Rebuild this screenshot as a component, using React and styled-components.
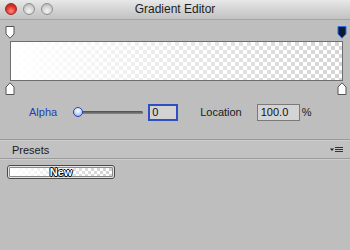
import React from "react";
import styled, { createGlobalStyle } from "styled-components";

const Global = createGlobalStyle`
  html, body { margin: 0; padding: 0; background: #bfbfbf; }
  body { width: 350px; height: 250px; overflow: hidden; font-family: "Liberation Sans", Arial, sans-serif; }
`;

const Window = styled.div`
  width: 350px;
  height: 250px;
  background: #bebebe;
  display: flex;
  flex-direction: column;
`;

const TitleBar = styled.div`
  height: 20px;
  display: flex;
  align-items: flex-start;
  position: relative;
  background: linear-gradient(#e8e8e8 0%, #d0d0d0 60%, #c2c2c2 100%);
  border-bottom: 1px solid #a4a4a4;
  box-sizing: border-box;
`;

const Lights = styled.div`
  display: flex;
  gap: 6px;
  padding: 3px 0 0 5px;
`;

const Light = styled.div`
  width: 12px;
  height: 12px;
  border-radius: 50%;
  box-sizing: border-box;
  border: 1px solid ${(p) => (p.$red ? "#9a2a2a" : "#8f8f8f")};
  background: ${(p) =>
    p.$red
      ? "radial-gradient(circle at 50% 70%, #ff8a80 0%, #e0332b 55%, #a81d16 100%)"
      : "radial-gradient(circle at 50% 70%, #f4f4f4 0%, #d2d2d2 55%, #a9a9a9 100%)"};
`;

const Title = styled.div`
  position: absolute;
  left: 0;
  right: 0;
  top: 2px;
  text-align: center;
  font-size: 12px;
  line-height: 14px;
  color: #1e1e1e;
  pointer-events: none;
`;

const Body = styled.div`
  flex: 1;
  display: flex;
  flex-direction: column;
  padding-top: 6px;
`;

const MarkerRow = styled.div`
  display: flex;
  justify-content: space-between;
  padding: 0 3px 0 5px;
  height: ${(p) => p.$h}px;
  align-items: ${(p) => (p.$bottom ? "flex-start" : "flex-end")};
`;

const Marker = ({ dark, up }) => (
  <svg width="10" height="13" viewBox="0 0 10 13" style={{ display: "block" }}>
    {up ? (
      <path d="M1 12.5 V5 L5 0.8 L9 5 V12.5 Z" fill="#fff" stroke="#555" strokeWidth="1" />
    ) : (
      <path
        d="M1 0.5 H9 V8 L5 12.2 L1 8 Z"
        fill={dark ? "#0d1a33" : "#fff"}
        stroke={dark ? "#2a6fe0" : "#555"}
        strokeWidth="1"
      />
    )}
  </svg>
);

const GradientBar = styled.div`
  margin: 2px 7px 1px 10px;
  height: 40px;
  box-sizing: border-box;
  border: 1px solid #6e6e6e;
  background:
    linear-gradient(to right, #fff 0%, rgba(255, 255, 255, 0) 100%),
    conic-gradient(#d4d4d4 0 25%, #fff 0 50%, #d4d4d4 0 75%, #fff 0) 0 0 / 8px 8px;
`;

const ControlRow = styled.div`
  display: flex;
  align-items: center;
  height: 18px;
  margin-top: 8px;
  padding-left: 29px;
  font-size: 11px;
`;

const Label = styled.span`
  color: ${(p) => (p.$blue ? "#1d3fb8" : "#1a1a1a")};
  margin-right: ${(p) => p.$mr || 0}px;
`;

const Slider = styled.div`
  position: relative;
  width: 70px;
  height: 12px;
  margin-right: 5px;
  display: flex;
  align-items: center;
`;

const Track = styled.div`
  width: 100%;
  height: 3px;
  border-radius: 2px;
  background: linear-gradient(#4a4a4a, #8a8a8a);
`;

const Knob = styled.div`
  position: absolute;
  left: 0;
  top: 1px;
  width: 10px;
  height: 10px;
  border-radius: 50%;
  box-sizing: border-box;
  border: 1px solid #2a47b8;
  background: radial-gradient(circle at 50% 35%, #fff 0%, #b9d0f5 60%, #6f93dc 100%);
`;

const Field = styled.div`
  width: ${(p) => p.$w}px;
  height: 17px;
  box-sizing: border-box;
  border: ${(p) => (p.$focus ? "2px solid #2f4fc0" : "1px solid #7a7a7a")};
  background: ${(p) => (p.$focus ? "#d2d2d2" : "#d4d4d4")};
  color: #111;
  font-size: 11px;
  line-height: ${(p) => (p.$focus ? 13 : 15)}px;
  padding-left: ${(p) => (p.$focus ? 2 : 3)}px;
  margin-right: ${(p) => p.$mr || 0}px;
`;

const Divider = styled.div`
  height: 1px;
  background: #9a9a9a;
  border-bottom: 1px solid #cdcdcd;
`;

const PresetsHeader = styled.div`
  margin-top: 18px;
  display: flex;
  flex-direction: column;
`;

const HeaderBar = styled.div`
  height: 17px;
  display: flex;
  align-items: center;
  justify-content: space-between;
  padding: 0 6px 0 12px;
  font-size: 11px;
  color: #1a1a1a;
  background: #c2c2c2;
`;

const MenuIcon = () => (
  <svg width="14" height="8" viewBox="0 0 14 8" style={{ display: "block" }}>
    <path d="M0 2.5 H4 L2 5 Z" fill="#222" />
    <rect x="5" y="1" width="8" height="1" fill="#333" />
    <rect x="5" y="3" width="8" height="1" fill="#333" />
    <rect x="5" y="5" width="8" height="1" fill="#333" />
  </svg>
);

const PresetsBody = styled.div`
  padding: 5px 7px;
`;

const PresetSwatch = styled.div`
  width: 108px;
  height: 14px;
  box-sizing: border-box;
  border: 1px solid #4a4a4a;
  border-radius: 3px;
  padding: 1px;
  background: #e4e4e4;
`;

const SwatchInner = styled.div`
  height: 100%;
  box-sizing: border-box;
  border: 1px solid #8a8a8a;
  border-radius: 1px;
  display: flex;
  align-items: center;
  justify-content: center;
  font-size: 11px;
  font-weight: bold;
  color: #fff;
  text-shadow: 1px 0 0 #000, -1px 0 0 #000, 0 1px 0 #000, 0 -1px 0 #000;
  line-height: 8px;
  background:
    linear-gradient(to right, #fff 0%, rgba(255, 255, 255, 0) 100%),
    conic-gradient(#cfcfcf 0 25%, #fff 0 50%, #cfcfcf 0 75%, #fff 0) 0 0 / 6px 6px;
`;

export default function App() {
  return (
    <Window>
      <Global />
      <TitleBar>
        <Lights>
          <Light $red />
          <Light />
          <Light />
        </Lights>
        <Title>Gradient Editor</Title>
      </TitleBar>
      <Body>
        <MarkerRow $h={13}>
          <Marker />
          <Marker dark />
        </MarkerRow>
        <GradientBar />
        <MarkerRow $h={13} $bottom>
          <Marker up />
          <Marker up />
        </MarkerRow>
        <ControlRow>
          <Label $blue $mr={16}>Alpha</Label>
          <Slider>
            <Track />
            <Knob />
          </Slider>
          <Field $w={30} $focus $mr={22}>0</Field>
          <Label $mr={15}>Location</Label>
          <Field $w={43} $mr={2}>100.0</Field>
          <Label>%</Label>
        </ControlRow>
        <PresetsHeader>
          <Divider />
          <HeaderBar>
            <span>Presets</span>
            <MenuIcon />
          </HeaderBar>
          <Divider />
        </PresetsHeader>
        <PresetsBody>
          <PresetSwatch>
            <SwatchInner>New</SwatchInner>
          </PresetSwatch>
        </PresetsBody>
      </Body>
    </Window>
  );
}
